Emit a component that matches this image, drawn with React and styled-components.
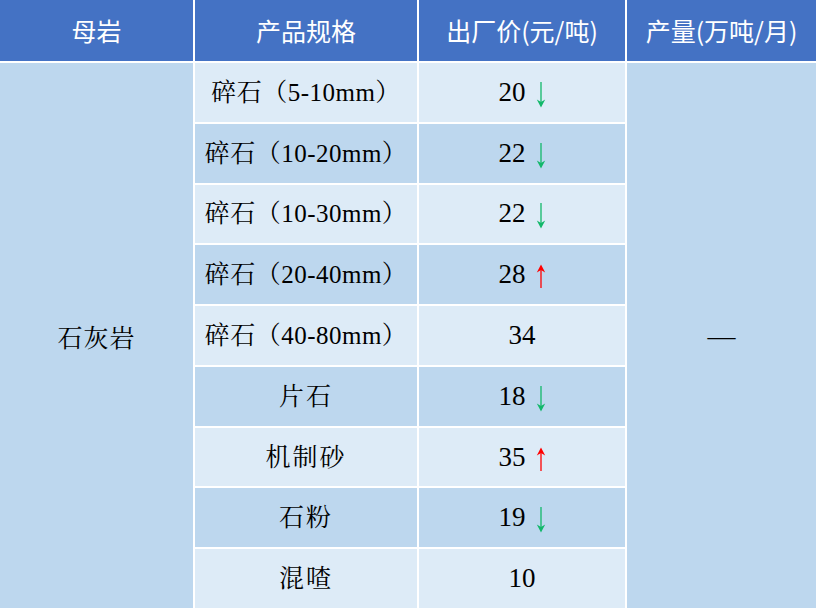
import React from "react";
import styled, { createGlobalStyle } from "styled-components";

const GlobalStyle = createGlobalStyle`
  html, body { margin: 0; padding: 0; background: #ffffff; }
  body { width: 816px; height: 608px; overflow: hidden; }
`;

const Table = styled.div`
  display: grid;
  grid-template-columns: 193px 222px 206px 1fr;
  grid-template-rows: 61px repeat(9, 1fr);
  gap: 2px;
  width: 816px;
  height: 608px;
  background: #ffffff;
  box-sizing: border-box;
`;

const HeadCell = styled.div`
  background: #4472c4;
  color: #ffffff;
  display: flex;
  align-items: center;
  justify-content: center;
  font-family: "Noto Sans CJK SC", "Noto Sans", sans-serif;
  font-size: 25px;
  line-height: 1;
`;

const MergedCell = styled.div`
  grid-row: 2 / span 9;
  grid-column: ${(p) => p.$col};
  background: #bdd7ee;
  display: flex;
  align-items: center;
  justify-content: center;
  font-family: "Liberation Serif", "Noto Serif CJK SC", "Noto Sans CJK SC", serif;
  font-size: ${(p) => (p.$dash ? "28px" : "25px")};
  letter-spacing: ${(p) => (p.$dash ? "0" : "1px")};
  color: #000000;
`;

const Cell = styled.div`
  background: ${(p) => (p.$dark ? "#bdd7ee" : "#ddebf7")};
  display: flex;
  align-items: center;
  justify-content: center;
  color: #000000;
  font-family: "Liberation Serif", "Noto Serif CJK SC", "Noto Sans CJK SC", serif;
  font-size: 25px;
  line-height: 1;
`;

const PriceCell = styled(Cell)`
  font-size: 27px;
  gap: 10px;
`;

const ArrowSvg = styled.svg`
  width: 10px;
  height: 26px;
  margin-top: 5px;
  flex: none;
`;

const Arrow = ({ dir }) => {
  const color = dir === "up" ? "#ff0000" : "#12b86a";
  if (dir === "up") {
    return (
      <ArrowSvg viewBox="0 0 10 26">
        <line x1="5" y1="4" x2="5" y2="24" stroke={color} strokeWidth="1.3" />
        <path d="M0.8 8.5 L5 0.5 L9.2 8.5 L5 6 Z" fill={color} />
      </ArrowSvg>
    );
  }
  return (
    <ArrowSvg viewBox="0 0 10 26">
      <line x1="5" y1="0" x2="5" y2="22" stroke={color} strokeWidth="1.3" />
      <path d="M0.8 17.5 L5 25.5 L9.2 17.5 L5 20 Z" fill={color} />
    </ArrowSvg>
  );
};

const rows = [
  { name: "碎石（5-10mm）", price: 20, dir: "down" },
  { name: "碎石（10-20mm）", price: 22, dir: "down" },
  { name: "碎石（10-30mm）", price: 22, dir: "down" },
  { name: "碎石（20-40mm）", price: 28, dir: "up" },
  { name: "碎石（40-80mm）", price: 34, dir: null },
  { name: "片石", price: 18, dir: "down" },
  { name: "机制砂", price: 35, dir: "up" },
  { name: "石粉", price: 19, dir: "down" },
  { name: "混喳", price: 10, dir: null },
];

const NameText = styled.span`
  letter-spacing: ${(p) => (p.$short ? "2px" : "0.5px")};
`;

export default function App() {
  return (
    <>
      <GlobalStyle />
      <Table>
        <HeadCell>母岩</HeadCell>
        <HeadCell>产品规格</HeadCell>
        <HeadCell>出厂价(元/吨)</HeadCell>
        <HeadCell>产量(万吨/月)</HeadCell>
        <MergedCell $col={1}>石灰岩</MergedCell>
        {rows.map((r, i) => (
          <React.Fragment key={i}>
            <Cell $dark={i % 2 === 1} style={{ gridColumn: 2, gridRow: i + 2 }}>
              <NameText $short={r.name.length <= 3}>{r.name}</NameText>
            </Cell>
            <PriceCell $dark={i % 2 === 1} style={{ gridColumn: 3, gridRow: i + 2 }}>
              <span>{r.price}</span>
              {r.dir && <Arrow dir={r.dir} />}
            </PriceCell>
          </React.Fragment>
        ))}
        <MergedCell $col={4} $dash>—</MergedCell>
      </Table>
    </>
  );
}
